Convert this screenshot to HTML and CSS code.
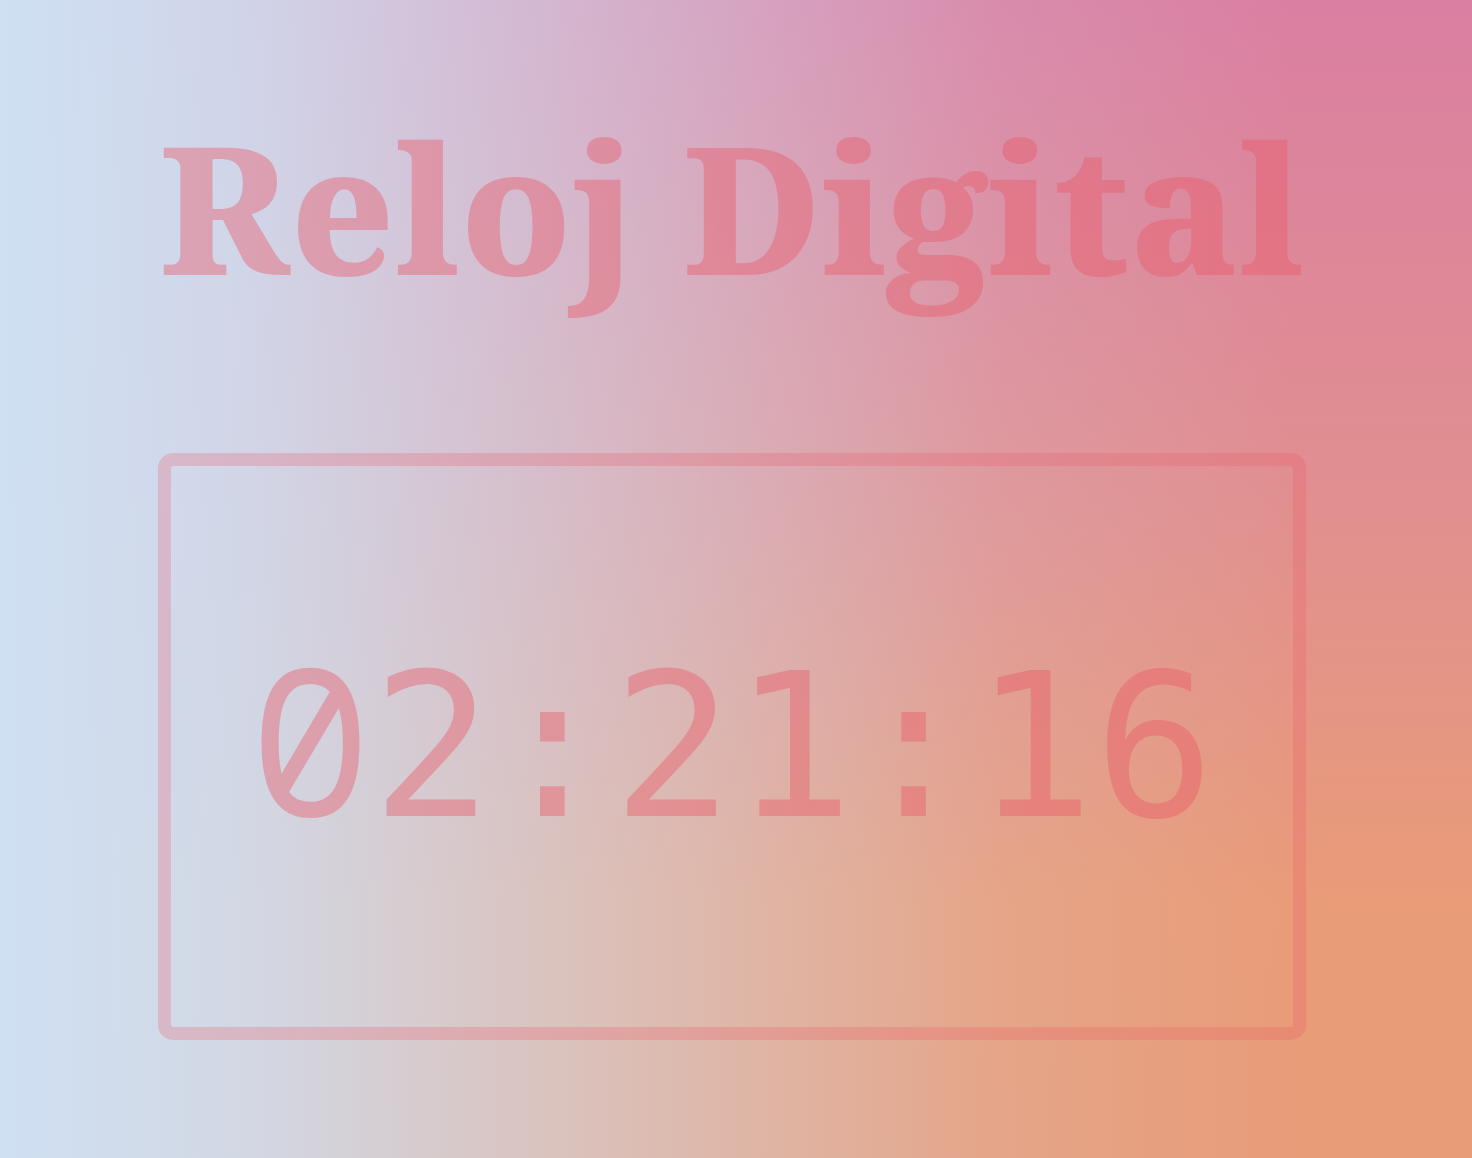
FILE: index.html
```html
<!DOCTYPE html>
<html lang="es">
<head>
<meta charset="utf-8">
<title>Reloj Digital</title>
<link rel="stylesheet" href="styles.css">
</head>
<body>
<main class="page">
  <h1 class="title">Reloj Digital</h1>
  <div class="clock-box">
    <div class="clock"><span class="zero">0</span>2:21:16</div>
  </div>
</main>
</body>
</html>
```
FILE: styles.css
```css
html, body {
  margin: 0;
  padding: 0;
}
body {
  min-height: 100vh;
  background:
    linear-gradient(to right,
      rgba(207, 224, 243, 1) 0%,
      rgba(207, 224, 243, 0.87) 17%,
      rgba(207, 224, 243, 0.68) 30%,
      rgba(207, 224, 243, 0.43) 47%,
      rgba(207, 224, 243, 0.13) 68%,
      rgba(207, 224, 243, 0) 88%),
    linear-gradient(to bottom, #da7fa2 0%, #e1908f 45%, #e99c78 78%, #e89c78 100%);
  overflow: hidden;
}
.page {
  width: 1148px;
  margin-left: 158px;
  padding-top: 100px;
  display: flex;
  flex-direction: column;
}
.title {
  margin: 0;
  font-family: "Noto Serif", "DejaVu Serif", serif;
  font-weight: 800;
  font-size: 178px;
  line-height: 1.2;
  text-align: center;
  color: rgba(234, 88, 103, 0.42);
  white-space: nowrap;
}
.clock-box {
  margin-top: 139px;
  height: 587px;
  box-sizing: border-box;
  border: 13px solid rgba(234, 88, 103, 0.26);
  border-radius: 15px;
  display: flex;
  align-items: center;
  justify-content: center;
}
.clock {
  font-family: "DejaVu Sans Mono", monospace;
  font-size: 200px;
  line-height: 1.2;
  color: rgba(234, 88, 103, 0.42);
  white-space: nowrap;
  margin-bottom: 10px;
}
.zero {
  font-family: "Noto Sans Mono", "DejaVu Sans Mono", monospace;
  font-size: 1.02em;
}
```
